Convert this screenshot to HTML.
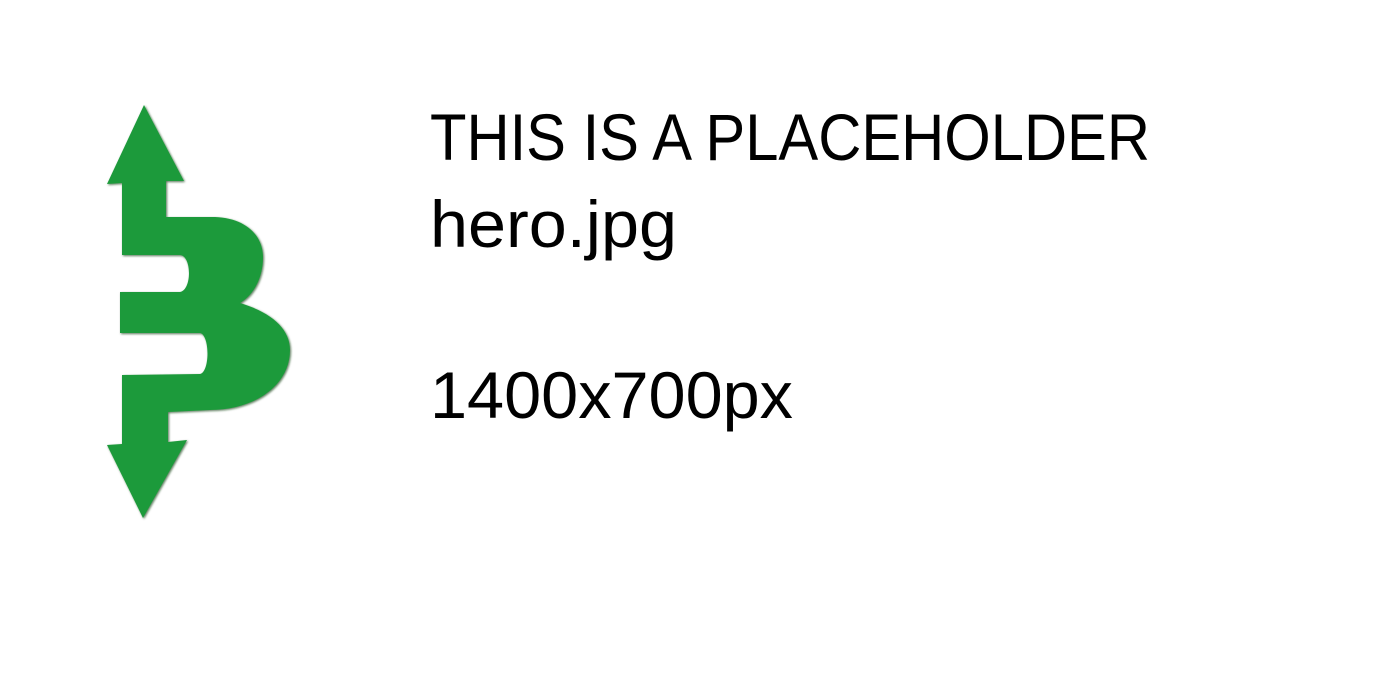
<!DOCTYPE html>
<html><head><style>html,body{margin:0;padding:0;background:#fff;width:1400px;height:700px;overflow:hidden}</style></head>
<body>
<svg width="1400" height="700" viewBox="0 0 1400 700" xmlns="http://www.w3.org/2000/svg">
<defs><filter id="s"><feDropShadow dx="1" dy="1" stdDeviation="1" flood-color="#0a3a10" flood-opacity="0.7"/></filter></defs>
<path filter="url(#s)" fill="#1f9a3a" d="M144 105 L184 181 L166 181 L166 217 L215 217 C245 218 263 235 263 257 C263 280 252 296 240 303 C270 312 290 328 290 350 C290 385 255 410 210 410 L168 412 L168 442 L187 440 L143 518 L107 445 L122 444 L122 375 L200 374 C210 372 210 335 200 333 L120 333 L120 292 L180 292 C192 290 192 256 180 255 L122 255 L122 183 L107 184 Z"/>
<g font-family="Liberation Sans, sans-serif" fill="#000">
<text x="430" y="160" font-size="66" textLength="720" lengthAdjust="spacingAndGlyphs">THIS IS A PLACEHOLDER</text>
<text x="430" y="247" font-size="66" textLength="247" lengthAdjust="spacingAndGlyphs">hero.jpg</text>
<text x="430" y="418" font-size="66" textLength="363" lengthAdjust="spacingAndGlyphs">1400x700px</text>
</g>
</svg>
</body></html>
